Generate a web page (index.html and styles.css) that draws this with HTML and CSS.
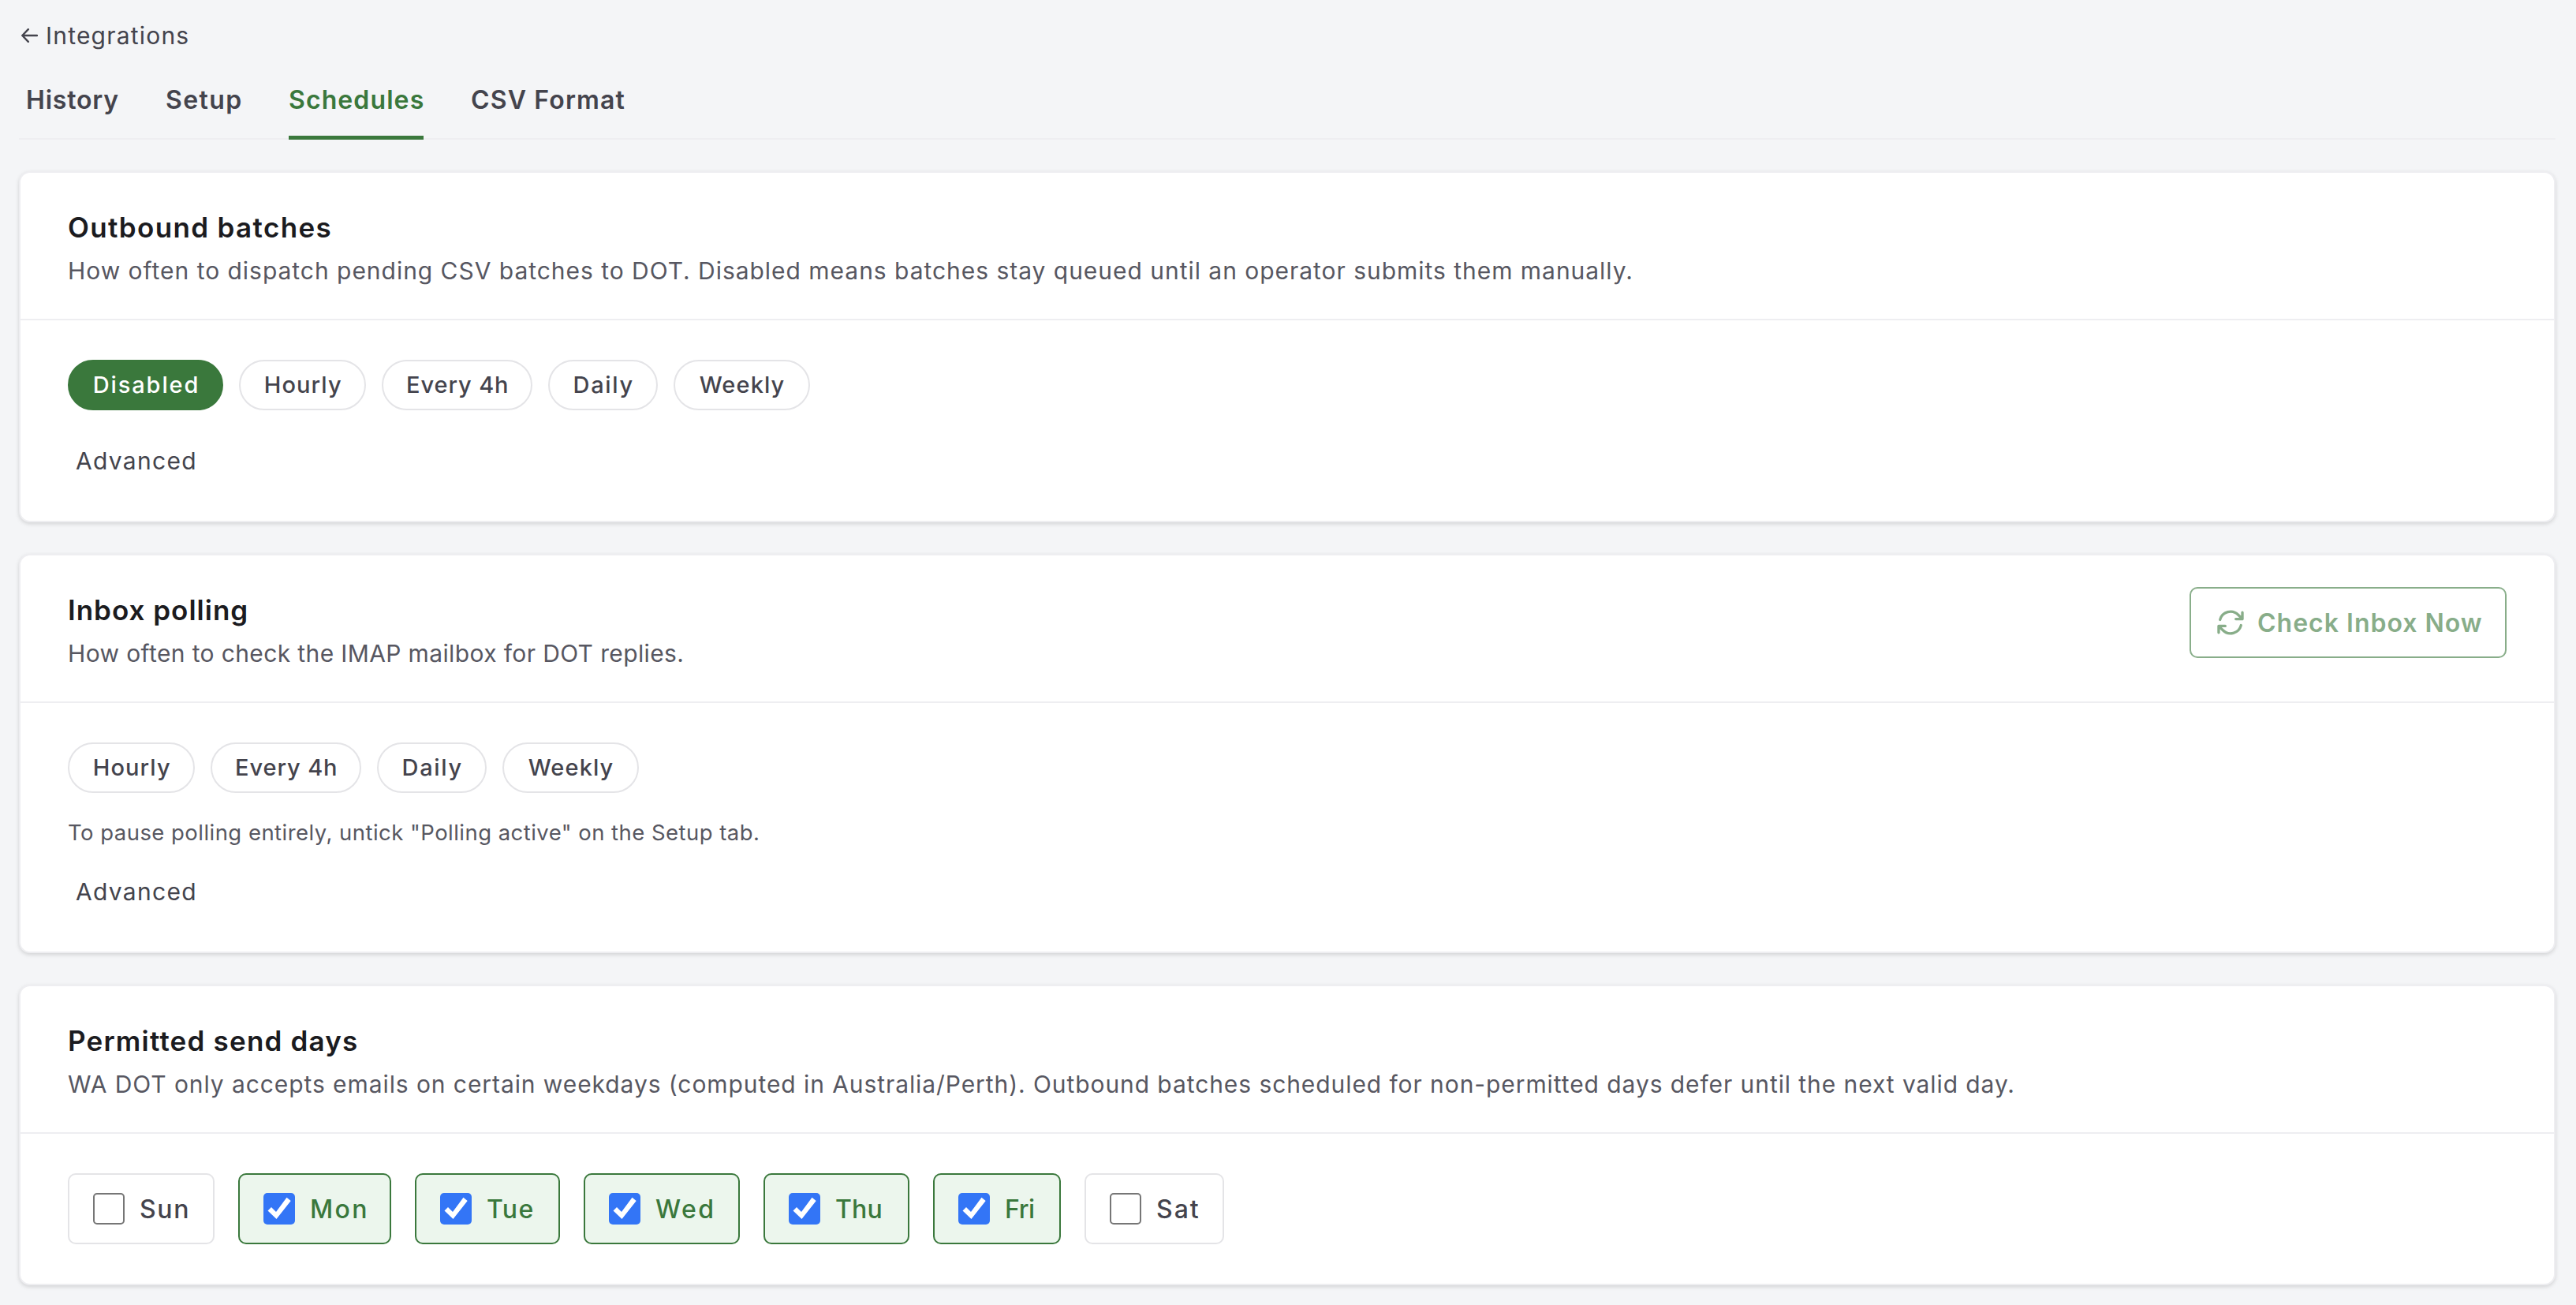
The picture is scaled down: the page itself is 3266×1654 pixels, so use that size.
FILE: index.html
```html
<!DOCTYPE html>
<html lang="en">
<head>
    <meta charset="UTF-8">
    <meta name="viewport" content="width=device-width, initial-scale=1.0">
    <title>Integrations - Schedules</title>
    <link rel="stylesheet" href="styles.css">
</head>
<body>
    <svg class="sprite" aria-hidden="true">
        <symbol id="tick" viewBox="0 0 40 40">
            <path d="M5.500 22.500 L10 18 L16 24 L29.500 5.800 L34.700 10 L16.500 33 Z" />
        </symbol>
    </svg>

    <a class="back-link" href="#">
        <svg class="back-arrow" viewBox="0 0 22 18"><path d="M9.800 1.200 L2.300 9 L9.800 16.800 M2.300 9 H21" /></svg>
        <span>Integrations</span>
    </a>

    <nav class="tabs">
        <a class="tab tab-history" href="#">History</a>
        <a class="tab tab-setup" href="#">Setup</a>
        <a class="tab tab-schedules active" href="#">Schedules</a>
        <a class="tab tab-csv" href="#">CSV Format</a>
    </nav>

    <main class="cards">
        <section class="card outbound">
            <div class="card-header">
                <div>
                    <h2>Outbound batches</h2>
                    <p class="description">How often to dispatch pending CSV batches to DOT. Disabled means batches stay queued until an operator submits them manually.</p>
                </div>
            </div>
            <div class="card-body">
                <div class="pills">
                    <button class="pill disabled-pill active">Disabled</button>
                    <button class="pill hourly">Hourly</button>
                    <button class="pill every-4h">Every 4h</button>
                    <button class="pill daily">Daily</button>
                    <button class="pill weekly">Weekly</button>
                </div>
                <button class="advanced">Advanced</button>
            </div>
        </section>

        <section class="card inbox">
            <div class="card-header">
                <div>
                    <h2>Inbox polling</h2>
                    <p class="description">How often to check the IMAP mailbox for DOT replies.</p>
                </div>
                <button class="check-btn" disabled>
                    <svg viewBox="0 0 24 24"><path d="M16.023 9.348h4.992v-.001M2.985 19.644v-4.992m0 0h4.992m-4.993 0 3.181 3.183a8.250 8.250 0 0 0 13.803-3.700M4.031 9.865a8.250 8.250 0 0 1 13.803-3.700l3.181 3.182m0-4.991v4.990" /></svg>
                    <span>Check Inbox Now</span>
                </button>
            </div>
            <div class="card-body">
                <div class="pills">
                    <button class="pill hourly">Hourly</button>
                    <button class="pill every-4h">Every 4h</button>
                    <button class="pill daily">Daily</button>
                    <button class="pill weekly">Weekly</button>
                </div>
                <p class="hint">To pause polling entirely, untick "Polling active" on the Setup tab.</p>
                <button class="advanced">Advanced</button>
            </div>
        </section>

        <section class="card send-days">
            <div class="card-header">
                <div>
                    <h2>Permitted send days</h2>
                    <p class="description">WA DOT only accepts emails on certain weekdays (computed in Australia/Perth). Outbound batches scheduled for non-permitted days defer until the next valid day.</p>
                </div>
            </div>
            <div class="card-body">
                <div class="days">
                    <label class="day sun"><span class="box"></span><span>Sun</span></label>
                    <label class="day mon checked"><span class="box"><svg><use href="#tick" /></svg></span><span>Mon</span></label>
                    <label class="day tue checked"><span class="box"><svg><use href="#tick" /></svg></span><span>Tue</span></label>
                    <label class="day wed checked"><span class="box"><svg><use href="#tick" /></svg></span><span>Wed</span></label>
                    <label class="day thu checked"><span class="box"><svg><use href="#tick" /></svg></span><span>Thu</span></label>
                    <label class="day fri checked"><span class="box"><svg><use href="#tick" /></svg></span><span>Fri</span></label>
                    <label class="day sat"><span class="box"></span><span>Sat</span></label>
                </div>
            </div>
        </section>
    </main>
</body>
</html>
```
FILE: styles.css
```css
:root {
    --bg: #f4f5f7;
    --card-bg: #ffffff;
    --line: #eeeef1;
    --border: #e4e4e7;
    --text-dark: #1b1b20;
    --text: #44444d;
    --text-muted: #575761;
    --green: #3a783c;
    --green-light: #ecf6ed;
    --blue: #3375f6;
}

* {
    box-sizing: border-box;
}

body {
    margin: 0;
    padding: 24px 26px 24px 24px;
    font-family: 'Inter', sans-serif;
    font-size: 30px;
    color: var(--text);
    background-color: var(--bg);
}

h2, p {
    margin: 0;
}

a {
    color: inherit;
    text-decoration: none;
}

button {
    font-family: inherit;
    color: inherit;
    background: none;
    white-space: nowrap;
}

.sprite {
    display: none;
}

.back-link {
    display: flex;
    align-items: center;
    gap: 10px;
    height: 42px;
    padding-left: 2px;
    letter-spacing: 1.2px;
}

.back-arrow {
    width: 22px;
    height: 18px;
    fill: none;
    stroke: currentColor;
    stroke-width: 2.4;
    stroke-linecap: round;
    stroke-linejoin: round;
}

/* Tabs */
.tabs {
    display: flex;
    gap: 60px;
    height: 111px;
    padding-left: 9px;
    border-bottom: 2px solid var(--line);
}

.tab {
    height: 111px;
    padding-top: 40px;
    font-size: 32px;
    font-weight: 600;
    line-height: 42px;
    white-space: nowrap;
}

.tab.active {
    color: var(--green);
    border-bottom: 5px solid var(--green);
}

.tab-history { width: 117px; letter-spacing: 0.8px; }
.tab-setup { width: 96px; letter-spacing: 1.4px; }
.tab-schedules { width: 171px; letter-spacing: 1.1px; }
.tab-csv { letter-spacing: 1.15px; }

/* Cards */
.cards {
    display: flex;
    flex-direction: column;
    gap: 40px;
    margin-top: 40px;
}

.card {
    background-color: var(--card-bg);
    border: 2px solid var(--line);
    border-radius: 14px;
    box-shadow: 0 2px 6px rgba(0,0,0,0.09), 0 2px 4px rgba(0,0,0,0.06);
}

.card-header {
    display: flex;
    justify-content: space-between;
    align-items: flex-start;
    height: 187px;
    padding: 40px 60px 0;
    border-bottom: 2px solid var(--line);
}

h2 {
    margin-top: 4px;
    font-size: 35px;
    font-weight: 600;
    line-height: 50px;
    color: var(--text-dark);
}

.description {
    margin-top: 5px;
    line-height: 50px;
    color: var(--text-muted);
}

.outbound h2 { letter-spacing: 1.35px; }
.outbound .description { letter-spacing: 0.97px; }
.inbox h2 { letter-spacing: 1px; }
.inbox .description { letter-spacing: 0.37px; }
.send-days h2 { letter-spacing: 1.2px; }
.send-days .description { letter-spacing: 0.92px; }

.card-body {
    padding: 50px 60px;
}

.check-btn {
    display: flex;
    align-items: center;
    gap: 14px;
    width: 402px;
    height: 90px;
    padding: 0 0 0 30px;
    border: 2px solid var(--green);
    border-radius: 10px;
    font-size: 32px;
    font-weight: 600;
    letter-spacing: 1px;
    color: var(--green);
    opacity: 0.6;
}

.check-btn svg {
    width: 40px;
    height: 40px;
    fill: none;
    stroke: currentColor;
    stroke-width: 2;
    stroke-linecap: round;
    stroke-linejoin: round;
}

/* Frequency pills */
.pills {
    display: flex;
    gap: 20px;
}

.pill {
    height: 64px;
    padding: 0 0 2px 2px;
    border: 2px solid var(--border);
    border-radius: 32px;
    font-size: 29px;
    font-weight: 500;
}

.pill.active {
    color: white;
    background-color: var(--green);
    border-color: var(--green);
}

.disabled-pill { width: 197px; letter-spacing: 1.9px; }
.hourly { width: 160.5px; letter-spacing: 1.1px; }
.every-4h { width: 191.5px; letter-spacing: 0.9px; }
.daily { width: 138.5px; letter-spacing: 1.7px; }
.weekly { width: 173px; letter-spacing: 1.1px; }

.advanced {
    display: block;
    margin-top: 38px;
    padding: 0 10px;
    border: none;
    font-size: 30px;
    line-height: 52px;
    letter-spacing: 1.3px;
}

.hint {
    margin-top: 27px;
    font-size: 27.5px;
    line-height: 46px;
    letter-spacing: 0.46px;
    color: var(--text-muted);
}

.hint + .advanced {
    margin-top: 26px;
}

/* Weekday checkboxes */
.days {
    display: flex;
    gap: 30px;
}

.day {
    display: flex;
    align-items: center;
    gap: 19px;
    height: 90px;
    padding-left: 30px;
    border: 2px solid var(--border);
    border-radius: 10px;
    font-size: 32px;
    font-weight: 500;
}

.day.checked {
    color: var(--green);
    background-color: var(--green-light);
    border-color: var(--green);
}

.box {
    width: 40px;
    height: 40px;
    border: 2px solid #767676;
    border-radius: 5px;
}

.checked .box {
    border: none;
    background-color: var(--blue);
}

.box svg {
    display: block;
    width: 40px;
    height: 40px;
    fill: white;
}

.sun { width: 186px; letter-spacing: 1.7px; }
.mon { width: 194px; letter-spacing: 2.3px; }
.tue { width: 184px; letter-spacing: 1.3px; }
.wed { width: 198px; letter-spacing: 2.5px; }
.thu { width: 185px; letter-spacing: 0.2px; }
.fri { width: 162px; letter-spacing: -0.4px; }
.sat { width: 177px; letter-spacing: 2px; }
```
